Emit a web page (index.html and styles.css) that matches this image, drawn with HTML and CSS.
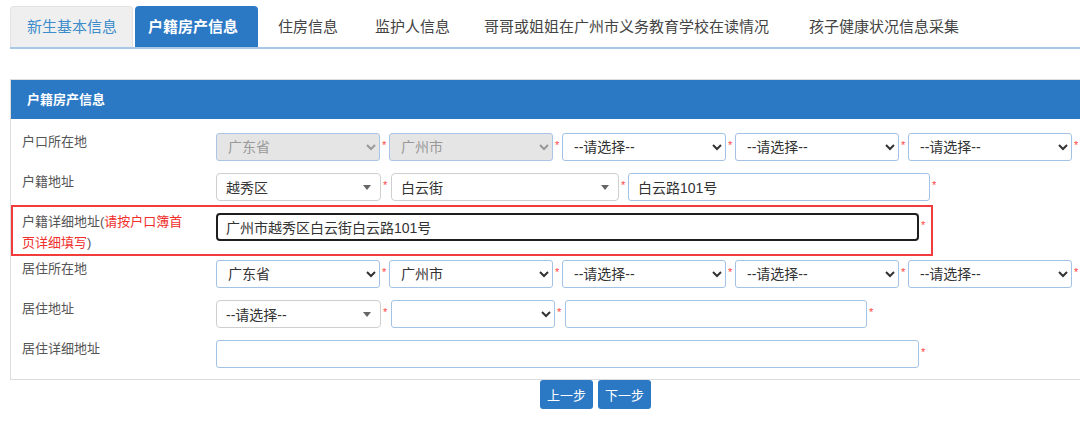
FILE: index.html
```html
<!DOCTYPE html>
<html lang="zh-CN">
<head>
<meta charset="utf-8">
<title>户籍房产信息</title>
<link rel="stylesheet" href="styles.css">
</head>
<body>
<div class="page">
  <ul class="tabs">
    <li class="tab tab-first">新生基本信息</li>
    <li class="tab tab-active">户籍房产信息</li>
    <li class="tab">住房信息</li>
    <li class="tab">监护人信息</li>
    <li class="tab">哥哥或姐姐在广州市义务教育学校在读情况</li>
    <li class="tab">孩子健康状况信息采集</li>
  </ul>

  <div class="panel">
    <div class="panel-head">户籍房产信息</div>
    <div class="panel-body">
      <div class="row">
        <div class="label">户口所在地</div>
        <div class="ctrls">
          <select class="sel w164" disabled><option>广东省</option></select><span class="star">*</span>
          <select class="sel w164" disabled><option>广州市</option></select><span class="star">*</span>
          <select class="sel w164"><option>--请选择--</option></select><span class="star">*</span>
          <select class="sel w164"><option>--请选择--</option></select><span class="star">*</span>
          <select class="sel w164"><option>--请选择--</option></select><span class="star">*</span>
        </div>
      </div>

      <div class="row">
        <div class="label">户籍地址</div>
        <div class="ctrls">
          <div class="chosen w165"><span>越秀区</span><i class="tri"></i></div><span class="star wide">*</span>
          <div class="chosen w228"><span>白云街</span><i class="tri"></i></div><span class="star">*</span>
          <input class="inp w302" type="text" value="白云路101号"><span class="star">*</span>
        </div>
      </div>

      <div class="row row-hl">
        <div class="hl-box"></div>
        <div class="label">
          <div class="lline">户籍详细地址(<span class="red">请按户口簿首</span></div>
          <div class="lline"><span class="red">页详细填写</span>)</div>
        </div>
        <div class="ctrls">
          <input class="inp inp-focus w703" type="text" value="广州市越秀区白云街白云路101号"><span class="star">*</span>
        </div>
      </div>

      <div class="row">
        <div class="label">居住所在地</div>
        <div class="ctrls">
          <select class="sel w164"><option>广东省</option></select><span class="star">*</span>
          <select class="sel w164"><option>广州市</option></select><span class="star">*</span>
          <select class="sel w164"><option>--请选择--</option></select><span class="star">*</span>
          <select class="sel w164"><option>--请选择--</option></select><span class="star">*</span>
          <select class="sel w164"><option>--请选择--</option></select><span class="star">*</span>
        </div>
      </div>

      <div class="row">
        <div class="label">居住地址</div>
        <div class="ctrls">
          <div class="chosen w165"><span>--请选择--</span><i class="tri"></i></div><span class="star wide">*</span>
          <select class="sel w164"><option></option></select><span class="star wide">*</span>
          <input class="inp w302" type="text" value=""><span class="star">*</span>
        </div>
      </div>

      <div class="row row-last">
        <div class="label">居住详细地址</div>
        <div class="ctrls">
          <input class="inp w703" type="text" value=""><span class="star">*</span>
        </div>
      </div>
    </div>
  </div>

  <div class="actions">
    <button class="btn" type="button">上一步</button>
    <button class="btn" type="button">下一步</button>
  </div>
</div>
</body>
</html>
```

FILE: styles.css
```css
html, body {
  margin: 0;
  padding: 0;
  background: #fff;
  overflow: hidden;
}
body {
  font-family: "Liberation Sans", "Noto Sans CJK SC", sans-serif;
  color: #333;
}
.page {
  padding: 6px 0 0 10px;
}

/* tabs */
.tabs {
  list-style: none;
  margin: 0;
  padding: 0;
  display: flex;
  align-items: flex-end;
  border-bottom: 2px solid #a9c8e9;
  height: 41px;
}
.tab {
  height: 41px;
  line-height: 41px;
  padding: 0 16px;
  margin-right: 2px;
  font-size: 15px;
  color: #444;
  box-sizing: border-box;
  border-radius: 4px 4px 0 0;
  white-space: nowrap;
}
.tab-first {
  background: #efefef;
  color: #3d8dcc;
  border: 1px solid #e2e2e2;
  border-bottom: none;
  line-height: 40px;
  width: 123px;
}
.tab-active {
  background: #2b78c4;
  color: #fff;
  font-weight: bold;
  width: 123px;
  padding: 0 13px;
}
.tab:nth-child(3) { padding: 0 18px; }
.tab:nth-child(4) { padding: 0 17px; }
.tab:nth-child(5) { padding: 0 18px 0 15px; }
.tab:nth-child(6) { padding: 0 18px 0 20px; }

/* panel */
.panel {
  margin-top: 30px;
  border: 1px solid #dcdcdc;
  border-top: none;
  border-right: none;
}
.panel-head {
  height: 39px;
  line-height: 39px;
  background: #2b78c4;
  color: #fff;
  font-size: 13px;
  font-weight: bold;
  padding-left: 16px;
  border-top: 1px solid #dcdcdc;
}
.panel-body {
  padding: 14px 0 0 11px;
}
.row {
  position: relative;
  display: flex;
  align-items: flex-start;
  min-height: 40px;
}
.row-hl { min-height: 47px; }
.row-last { min-height: 39px; }
.label {
  width: 166px;
  padding-right: 28px;
  margin-top: -2px;
  font-size: 13px;
  line-height: 21px;
  color: #555;
  flex: none;
  white-space: nowrap;
}
.red { color: #f0302c; }
.hl-box {
  position: absolute;
  left: -11px;
  top: -8px;
  width: 922px;
  height: 51px;
  border: 2px solid #f23b3b;
  box-sizing: border-box;
  pointer-events: none;
}
.ctrls {
  display: flex;
  align-items: flex-start;
}

/* controls */
.sel, .chosen, .inp {
  box-sizing: border-box;
  height: 28px;
  font-family: "Liberation Sans", "Noto Sans CJK SC", sans-serif;
  font-size: 14px;
  color: #333;
  background: #fff;
  flex: none;
}
.sel {
  border: 1px solid #a3c3e6;
  border-radius: 3px;
  padding: 0 6px 0 7px;
}
.sel:disabled {
  background: #e5e5e5;
  color: #999;
  border-color: #a9c6e6;
  opacity: 1;
}
.chosen {
  display: flex;
  align-items: center;
  justify-content: space-between;
  border: 1px solid #cfcfcf;
  border-radius: 4px;
  padding: 0 9px 0 9px;
  color: #333;
}
.tri {
  width: 0;
  height: 0;
  border-left: 4px solid transparent;
  border-right: 4px solid transparent;
  border-top: 5px solid #666;
}
.inp {
  border: 1px solid #a3c3e6;
  border-radius: 3px;
  padding: 0 9px;
  outline: none;
}
.inp-focus {
  border: 2px solid #1e1e1e;
  border-radius: 4px;
  padding: 0 8px;
}
.w164 { width: 164px; }
.w165 { width: 165px; }
.w228 { width: 228px; }
.w302 { width: 302px; }
.w703 { width: 703px; }

.star {
  flex: none;
  width: 9px;
  padding-left: 2px;
  box-sizing: border-box;
  color: #f44;
  font-size: 11px;
  line-height: 11px;
  padding-top: 7px;
}
.star.wide { width: 10px; }

/* buttons */
.actions {
  display: flex;
  gap: 5px;
  padding-left: 530px;
}
.btn {
  height: 29px;
  width: 53px;
  padding: 0;
  border: none;
  border-radius: 3px;
  background: #2b78c4;
  color: #fff;
  font-family: "Liberation Sans", "Noto Sans CJK SC", sans-serif;
  font-size: 13px;
}
```
